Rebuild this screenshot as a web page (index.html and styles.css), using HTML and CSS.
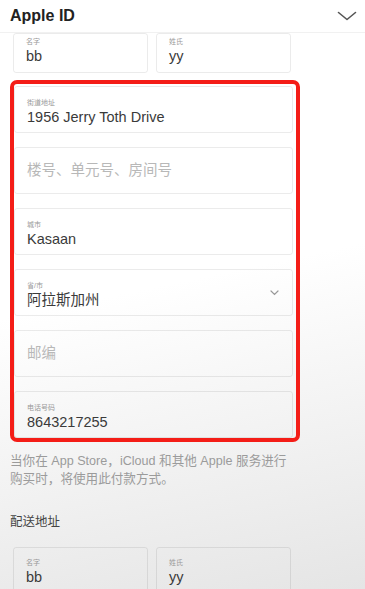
FILE: index.html
```html
<!DOCTYPE html>
<html lang="zh-CN">
<head>
    <meta charset="UTF-8">
    <meta name="viewport" content="width=device-width, initial-scale=1.0">
    <title>Apple ID</title>
    <link rel="stylesheet" href="styles.css">
</head>
<body>
    <header class="topbar">
        <h1>Apple ID</h1>
        <svg class="topbar-chevron" width="20" height="10" viewBox="0 0 20 10">
            <path d="M1.5 1.5 L10 8.5 L18.5 1.5" fill="none" stroke="#555" stroke-width="1.6" stroke-linecap="round" stroke-linejoin="round"/>
        </svg>
    </header>

    <div class="name-row name-row-top">
        <div class="field name-field">
            <span class="label">名字</span>
            <span class="value">bb</span>
        </div>
        <div class="field name-field">
            <span class="label">姓氏</span>
            <span class="value">yy</span>
        </div>
    </div>

    <div class="highlight">
        <div class="field">
            <span class="label">街道地址</span>
            <span class="value">1956 Jerry Toth Drive</span>
        </div>
        <div class="field empty">
            <span class="placeholder">楼号、单元号、房间号</span>
        </div>
        <div class="field">
            <span class="label">城市</span>
            <span class="value">Kasaan</span>
        </div>
        <div class="field select">
            <div class="select-text">
                <span class="label">省/市</span>
                <span class="value">阿拉斯加州</span>
            </div>
            <svg class="select-chevron" width="9" height="6" viewBox="0 0 9 6">
                <path d="M1 1 L4.5 4.5 L8 1" fill="none" stroke="#999" stroke-width="1.2" stroke-linecap="round"/>
            </svg>
        </div>
        <div class="field empty">
            <span class="placeholder">邮编</span>
        </div>
        <div class="field">
            <span class="label">电话号码</span>
            <span class="value">8643217255</span>
        </div>
    </div>

    <p class="note">当你在 App Store，iCloud 和其他 Apple 服务进行<br>购买时，将使用此付款方式。</p>

    <h2 class="section-title">配送地址</h2>

    <div class="name-row name-row-bottom">
        <div class="field name-field">
            <span class="label">名字</span>
            <span class="value">bb</span>
        </div>
        <div class="field name-field">
            <span class="label">姓氏</span>
            <span class="value">yy</span>
        </div>
    </div>
</body>
</html>
```

FILE: styles.css
```css
html, body {
    height: 100%;
}

body {
    margin: 0;
    overflow: hidden;
    font-family: "Liberation Sans", "Noto Sans CJK SC", sans-serif;
    color: #3a3a3a;
    background: linear-gradient(168deg, #ffffff 48%, #e5e5e5 100%);
}

.topbar {
    display: flex;
    justify-content: space-between;
    align-items: center;
    height: 32px;
    padding: 0 8px 0 10px;
    border-bottom: 1px solid #f1f1f1;
}

.topbar h1 {
    margin: 0;
    font-size: 16px;
    font-weight: bold;
    color: #222;
}

.topbar-chevron {
    display: block;
}

.name-row {
    display: flex;
    gap: 8px;
    padding-left: 13px;
}

.name-field {
    width: 135px;
}

.name-row-top .name-field {
    height: 40px;
    padding-top: 2px;
}

.name-row-bottom {
    margin-top: 17px;
}

.name-row-bottom .name-field {
    height: 47px;
    padding-top: 9px;
}

.field {
    box-sizing: border-box;
    display: flex;
    flex-direction: column;
    height: 47px;
    padding: 10px 12px 0 12px;
    border: 1px solid rgba(0, 0, 0, 0.08);
    border-radius: 3px;
}

.label {
    font-size: 7px;
    line-height: 12px;
    color: #999;
}

.value {
    font-size: 14.5px;
    line-height: 17px;
    color: #3a3a3a;
}

.highlight {
    box-sizing: border-box;
    display: flex;
    flex-direction: column;
    gap: 14px;
    width: 290px;
    margin: 7px 0 0 10px;
    padding: 2px 3px 0 0;
    border: 4px solid #f41d17;
    border-radius: 7px;
}

.field.empty {
    justify-content: center;
    padding-top: 0;
}

.placeholder {
    font-size: 14.5px;
    line-height: 17px;
    color: #b8b8b8;
}

.field.select {
    flex-direction: row;
    align-items: flex-start;
}

.select-text {
    display: flex;
    flex-direction: column;
    flex: 1;
}

.select-chevron {
    align-self: center;
    margin: -10px 1px 0 0;
}

.note {
    margin: 10px 0 0 10px;
    font-size: 12.6px;
    line-height: 18px;
    color: #9b9b9b;
}

.section-title {
    margin: 26px 0 0 10px;
    font-size: 12.5px;
    line-height: 16px;
    font-weight: normal;
    color: #444;
}
```
